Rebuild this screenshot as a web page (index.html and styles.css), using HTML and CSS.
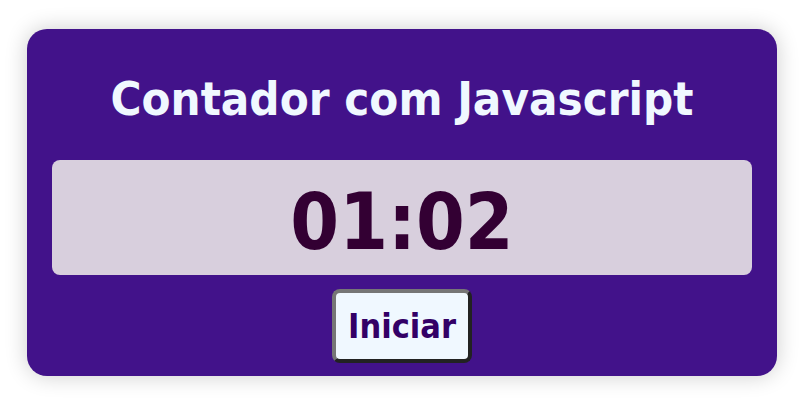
FILE: index.html
```html
<!DOCTYPE html>
<html lang="pt-BR">
<head>
<meta charset="utf-8">
<title>Contador com Javascript</title>
<link rel="stylesheet" href="styles.css">
</head>
<body>
<main class="card">
  <h1 class="title">Contador com Javascript</h1>
  <div class="display">01:02</div>
  <button class="btn" type="button">Iniciar</button>
</main>
</body>
</html>
```

FILE: styles.css
```css
html, body {
  margin: 0;
  padding: 0;
  background: #ffffff;
}
body {
  height: 405px;
  display: flex;
  align-items: center;
  justify-content: center;
  padding-left: 4px;
  box-sizing: border-box;
  font-family: "DejaVu Sans Condensed", "DejaVu Sans", Verdana, sans-serif;
  font-stretch: condensed;
}
.card {
  width: 700px;
  padding: 0 25px 13px;
  background: #42128a;
  border-radius: 20px;
  box-shadow: 0 0 22px rgba(0, 0, 0, 0.2);
  display: flex;
  flex-direction: column;
  align-items: center;
}
.title {
  margin: 42px 0 0;
  color: #f0f8ff;
  font-size: 47px;
  font-weight: bold;
  line-height: normal;
}
.display {
  margin-top: 34px;
  box-sizing: border-box;
  width: 100%;
  height: 115px;
  padding-top: 9px;
  background: #d8cfdd;
  border-radius: 8px;
  color: #330033;
  font-size: 78px;
  font-weight: bold;
  display: flex;
  align-items: center;
  justify-content: center;
}
.btn {
  margin-top: 14px;
  font-family: "DejaVu Sans Condensed", "DejaVu Sans", Verdana, sans-serif;
  font-stretch: condensed;
  font-size: 34px;
  font-weight: bold;
  color: #330066;
  background: #f0f8ff;
  border-style: solid;
  border-width: 4px;
  border-color: #767676 #222222 #222222 #767676;
  border-radius: 8px;
  padding: 13px 12px;
}
```
